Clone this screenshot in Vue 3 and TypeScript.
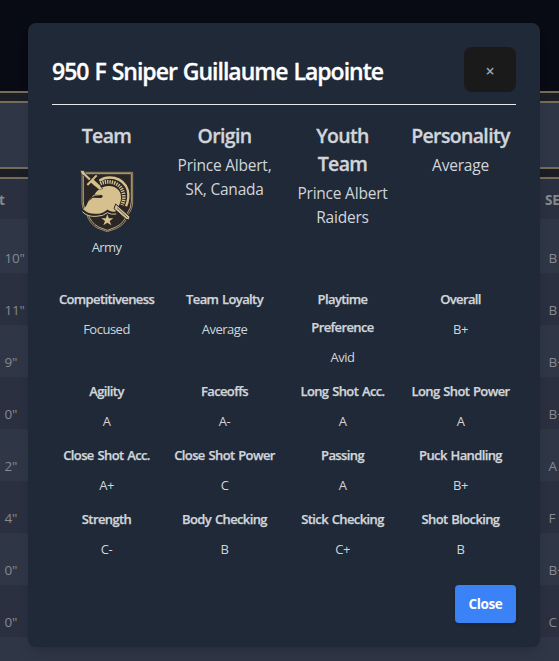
<script setup lang="ts">
interface Stat {
  label: string[]
  value: string
}

interface RosterRow {
  height: string
  grade: string
}

const rosterRows: RosterRow[] = [
  { height: '10"', grade: 'B' },
  { height: '11"', grade: 'B' },
  { height: '9"', grade: 'B+' },
  { height: '0"', grade: 'B+' },
  { height: '2"', grade: 'A' },
  { height: '4"', grade: 'F' },
  { height: '0"', grade: 'B+' },
  { height: '0"', grade: 'C' },
]

const stats: Stat[] = [
  { label: ['Competitiveness'], value: 'Focused' },
  { label: ['Team Loyalty'], value: 'Average' },
  { label: ['Playtime', 'Preference'], value: 'Avid' },
  { label: ['Overall'], value: 'B+' },
  { label: ['Agility'], value: 'A' },
  { label: ['Faceoffs'], value: 'A-' },
  { label: ['Long Shot Acc.'], value: 'A' },
  { label: ['Long Shot Power'], value: 'A' },
  { label: ['Close Shot Acc.'], value: 'A+' },
  { label: ['Close Shot Power'], value: 'C' },
  { label: ['Passing'], value: 'A' },
  { label: ['Puck Handling'], value: 'B+' },
  { label: ['Strength'], value: 'C-' },
  { label: ['Body Checking'], value: 'B' },
  { label: ['Stick Checking'], value: 'C+' },
  { label: ['Shot Blocking'], value: 'B' },
]
</script>

<template>
  <div class="screen">
    <div class="page">
      <div class="toolbar"></div>
      <div class="roster">
        <div class="roster-head"><span>t</span><span>SE</span></div>
        <div v-for="(row, i) in rosterRows" :key="i" class="roster-row">
          <span>{{ row.height }}</span><span>{{ row.grade }}</span>
        </div>
        <div class="roster-row"></div>
      </div>
    </div>

    <div class="overlay">
      <section class="modal">
        <header class="modal-head">
          <h2>950 F Sniper Guillaume Lapointe</h2>
          <button class="dismiss" type="button">×</button>
        </header>

        <div class="grid bio">
          <div class="cell">
            <h3>Team</h3>
            <svg class="crest" viewBox="24 24 168 195" width="56" height="65">
              <path d="M36 37H188V124Q188 148 174 164Q168 192 140 205L112 215L84 205Q58 192 50 162Q36 148 36 124Z" fill="#2a2626" stroke="#b59e70" stroke-width="2.5" />
              <path d="M40 41H184V124Q184 145 171 161Q164 188 138 201L112 211L86 201Q61 188 54 160Q40 146 40 124Z" fill="none" stroke="#d6c08e" stroke-width="2.5" />
              <path d="M88 62Q107 49 134 54Q164 62 173 90Q179 114 168 139" fill="none" stroke="#d6c08e" stroke-width="7" />
              <path d="M91 71Q112 61 134 69Q157 79 161 104Q163 122 156 135" fill="none" stroke="#d6c08e" stroke-width="11" stroke-dasharray="4 3" />
              <path d="M56 122L70 106L96 108L98 105L73 104Q85 85 107 79Q132 75 146 91Q156 104 152 124Q149 137 141 143L136 156Q124 159 112 151Q100 164 78 164Q53 164 39 152Q40 147 48 139Z" fill="#d6c08e" />
              <path d="M56 124L68 113L94 114L99 108L74 108L65 111Z" fill="#2a2626" />
              <path d="M38 151Q51 166 78 165Q99 165 112 153Q124 161 138 158" fill="none" stroke="#2a2626" stroke-width="7" />
              <path d="M37 155Q52 171 78 169Q100 169 112 158Q124 165 139 162" fill="none" stroke="#d6c08e" stroke-width="3" />
              <path d="M31 31L43 32L45 39L77 69L83 73L98 86L92 89L73 77L43 48L34 43Z" fill="#d6c08e" stroke="#2a2626" stroke-width="2" />
              <path d="M80 45L51 76" stroke="#2a2626" stroke-width="11" />
              <path d="M80 46L52 75" stroke="#d6c08e" stroke-width="6" />
              <path d="M68 56L61 66L85 86L96 89L89 76Z" fill="#d6c08e" />
              <path d="M137 132L180 170L177 180L168 178L132 146Z" fill="#d6c08e" stroke="#2a2626" stroke-width="3" />
              <path d="M141 143L173 173" stroke="#2a2626" stroke-width="2" />
              <path d="M112 163L116.500 175H130L119 183L124 196L112 188L100 196L105 183L94 175H107.500Z" fill="#d6c08e" />
            </svg>
            <p class="team-name">Army</p>
          </div>
          <div class="cell">
            <h3>Origin</h3>
            <p>Prince Albert,<br />SK, Canada</p>
          </div>
          <div class="cell">
            <h3>Youth<br />Team</h3>
            <p>Prince Albert<br />Raiders</p>
          </div>
          <div class="cell">
            <h3>Personality</h3>
            <p>Average</p>
          </div>
        </div>

        <div class="grid stats">
          <div v-for="stat in stats" :key="stat.label[0]" class="stat">
            <div v-for="line in stat.label" :key="line" class="stat-label">{{ line }}</div>
            <div class="stat-value">{{ stat.value }}</div>
          </div>
        </div>

        <footer class="modal-foot">
          <button class="close" type="button">Close</button>
        </footer>
      </section>
    </div>
  </div>
</template>

<style>
body {
  margin: 0;
  background: #080b14;
}
</style>

<style scoped>
* {
  box-sizing: border-box;
}

.screen {
  position: relative;
  height: 661px;
  overflow: hidden;
  font-family: 'Open Sans', 'Noto Sans', sans-serif;
  color: #d1d5db;
}

.page {
  height: 661px;
  padding-top: 91px;
  overflow: hidden;
}

.toolbar {
  height: 78px;
  border: solid #776c59;
  border-width: 2px 0;
  background: linear-gradient(#1c1e26 8px, #776c59 8px, #776c59 10px, #2f3646 10px);
}

.roster {
  border-top: 2px solid #776c59;
  box-shadow: 0 -8px #1c1e26;
  margin-top: 8px;
}

.roster-head,
.roster-row {
  display: flex;
  justify-content: space-between;
  font-size: 13.5px;
  line-height: 20px;
  letter-spacing: -0.2px;
  color: #858991;
  white-space: nowrap;
}

.roster-head {
  height: 40px;
  padding-top: 11px;
  background: #2a3040;
  font-weight: 700;
}

.roster-head span:first-child {
  margin-left: -1px;
}

.roster-head span:last-child {
  width: 14px;
}

.roster-row {
  height: 52px;
  padding: 27px 0 0 4.5px;
  background: #2a3040;
}

.roster-row:nth-child(2) {
  height: 54px;
  padding-top: 29px;
}

.roster-row:nth-child(even) {
  background: #2f3646;
}

.roster-row span:last-child {
  width: 10.5px;
}

.overlay {
  position: absolute;
  inset: 0;
  padding: 23px 19px 14px 28px;
}

.modal {
  display: flex;
  flex-direction: column;
  height: 624px;
  padding: 24px;
  border-radius: 8px;
  background: #1f2937;
  box-shadow: 0 10px 15px -3px rgb(0 0 0 / 10%), 0 4px 6px -4px rgb(0 0 0 / 10%);
}

.modal-head {
  display: flex;
  align-items: center;
  justify-content: space-between;
  height: 58px;
  padding-bottom: 12px;
  border-bottom: 1px solid #e5e7eb;
}

h2,
h3,
p {
  margin: 0;
}

h2 {
  padding-top: 2px;
  font-size: 23px;
  line-height: 32px;
  font-weight: 600;
  letter-spacing: -1px;
  word-spacing: 1px;
  color: #fff;
  white-space: nowrap;
  -webkit-text-stroke: 0.3px;
}

button {
  border: 0;
  font-family: inherit;
}

.dismiss {
  width: 52px;
  height: 45px;
  padding: 2px 0 0;
  border-radius: 8px;
  background: #1a1a1a;
  color: #9ca3af;
  font-size: 16px;
  font-weight: 600;
}

.grid {
  display: grid;
  grid-template-columns: repeat(4, 118px);
  margin: 0 -5px;
  text-align: center;
  white-space: nowrap;
}

.bio {
  height: 163px;
  margin-top: 17px;
}

h3 {
  padding-left: 1px;
  font-size: 19.5px;
  line-height: 28px;
  font-weight: 600;
  letter-spacing: -0.65px;
  -webkit-text-stroke: 0.3px;
}

.cell p {
  margin-top: 3px;
  padding-left: 1px;
  font-size: 15.5px;
  line-height: 24px;
  letter-spacing: -0.22px;
}

.crest {
  display: block;
  margin: 18px auto 0;
}

.cell .team-name {
  margin-top: 4px;
  font-size: 13px;
  line-height: 20px;
  letter-spacing: -0.6px;
}

.stats {
  row-gap: 10px;
}

.stat-label {
  padding-left: 1px;
  font-size: 13px;
  line-height: 28px;
  font-weight: 600;
  letter-spacing: -0.62px;
  word-spacing: 1px;
  -webkit-text-stroke: 0.25px;
}

.stat-value {
  margin-top: 6px;
  padding-left: 1px;
  font-size: 13px;
  line-height: 20px;
  letter-spacing: -0.5px;
}

.modal-foot {
  display: flex;
  justify-content: flex-end;
  margin-top: auto;
}

.close {
  width: 61px;
  height: 38px;
  padding: 0;
  border-radius: 4px;
  background: #3b82f6;
  box-shadow: 0 1px 3px rgb(0 0 0 / 20%);
  color: #fff;
  font-size: 13.5px;
  font-weight: 700;
  letter-spacing: -0.4px;
}
</style>
